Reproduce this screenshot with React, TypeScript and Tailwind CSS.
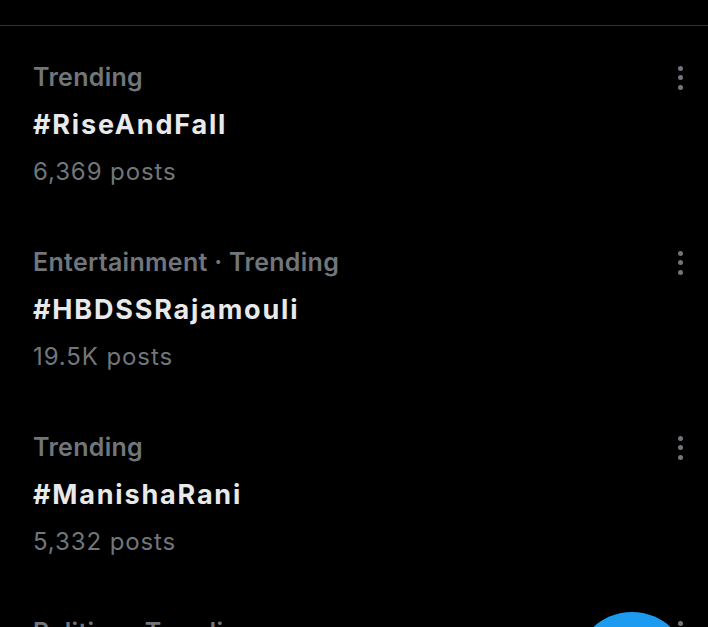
import * as React from "react";

interface Trend {
  id: string;
  category: string;
  tag: string;
  posts: string;
}

const TRENDS: Trend[] = [
  { id: "t1", category: "Trending", tag: "#RiseAndFall", posts: "6,369 posts" },
  { id: "t2", category: "Entertainment · Trending", tag: "#HBDSSRajamouli", posts: "19.5K posts" },
  { id: "t3", category: "Trending", tag: "#ManishaRani", posts: "5,332 posts" },
  { id: "t4", category: "Politics · Trending", tag: "#Politics", posts: "2,104 posts" },
];

/** Вертикальное меню «ещё» из трёх точек. */
function MoreDots() {
  return (
    <div className="mt-[10px] flex w-[5px] flex-col gap-[4.3px]">
      <span className="h-[5px] w-[5px] rounded-full bg-[#71767b]" />
      <span className="h-[5px] w-[5px] rounded-full bg-[#71767b]" />
      <span className="h-[5px] w-[5px] rounded-full bg-[#71767b]" />
    </div>
  );
}

function TrendRow({ trend }: { trend: Trend }) {
  return (
    <div className="flex items-start justify-between pb-[22px] pl-[33px] pr-[25px] pt-[30px]">
      <div className="min-w-0 flex-1">
        <p className="text-[25px] font-semibold leading-[42px] tracking-[0.3px] text-[#71767b]">
          {trend.category}
        </p>
        <p className="text-[27px] font-bold leading-[54px] tracking-[1.8px] text-[#e7e9ea]">
          {trend.tag}
        </p>
        <p className="mt-[3px] text-[24px] leading-[34px] tracking-[0.9px] text-[#71767b]">
          {trend.posts}
        </p>
      </div>
      <MoreDots />
    </div>
  );
}

export default function App() {
  return (
    <div
      className="relative h-[627px] w-[708px] overflow-hidden bg-black"
      style={{ fontFamily: "Inter, 'Noto Sans', sans-serif" }}
    >
      <div className="h-[25px]" />
      <div className="h-px bg-[#2f3336]" />
      {TRENDS.map((t) => (
        <TrendRow key={t.id} trend={t} />
      ))}
      <div className="absolute left-[575px] top-[612px] h-[114px] w-[114px] rounded-full bg-[#1d9bf0]" />
    </div>
  );
}
